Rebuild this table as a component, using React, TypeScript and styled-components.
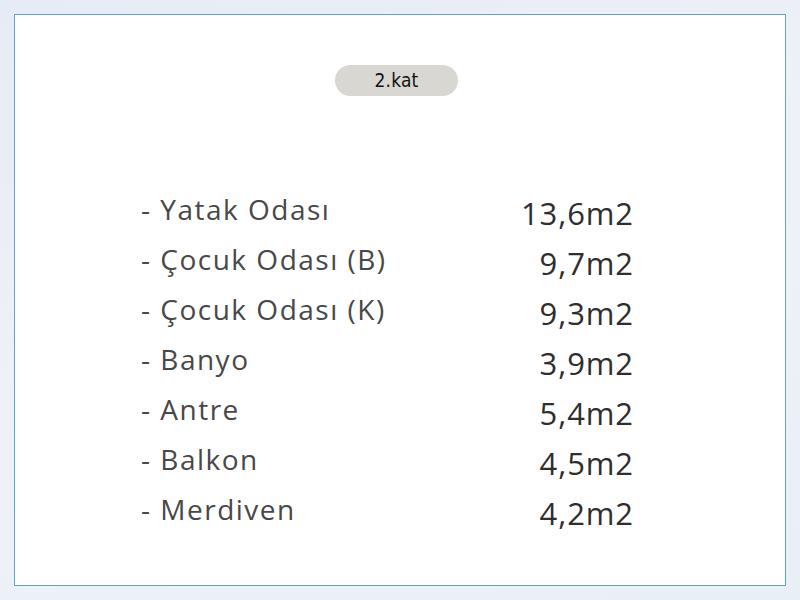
import React from "react";
import styled, { createGlobalStyle } from "styled-components";

const Global = createGlobalStyle`
  html, body { margin: 0; padding: 0; }
  body {
    width: 800px;
    height: 600px;
    overflow: hidden;
    background: linear-gradient(160deg, #e6ecf5 0%, #eef2f8 50%, #e9eff7 100%);
  }
`;

const Page = styled.div`
  width: 800px;
  height: 600px;
  padding: 14px;
  box-sizing: border-box;
`;

const Card = styled.div`
  width: 772px;
  height: 572px;
  box-sizing: border-box;
  border: 1px solid #5ea7bf;
  background: #ffffff;
  display: flex;
  flex-direction: column;
  align-items: center;
  padding-top: 50px;
`;

const Pill = styled.div`
  width: 123px;
  height: 31px;
  border-radius: 16px;
  background: #d9d7d2;
  display: flex;
  align-items: center;
  justify-content: center;
  font-family: "DejaVu Sans", sans-serif;
  font-stretch: condensed;
  font-weight: 400;
  font-size: 19px;
  letter-spacing: 0.2px;
  color: #111111;
  margin-left: -7px;
  padding-bottom: 2px;
  box-sizing: border-box;
`;

const List = styled.div`
  margin-top: 92px;
  width: 492px;
  margin-left: -26px;
  display: flex;
  flex-direction: column;
`;

const Row = styled.div`
  display: flex;
  justify-content: space-between;
  align-items: center;
  height: 50px;
`;

const Label = styled.span`
  font-family: "Open Sans", "Liberation Sans", sans-serif;
  font-size: 28px;
  letter-spacing: 1.5px;
  color: #484848;
  margin-top: -8px;
`;

const Value = styled.span`
  font-family: "Open Sans", "Liberation Sans", sans-serif;
  font-size: 31px;
  letter-spacing: 0.9px;
  color: #2e2e2e;
  margin-right: -1px;
`;

const rooms: [string, string][] = [
  ["Yatak Odası", "13,6m2"],
  ["Çocuk Odası (B)", "9,7m2"],
  ["Çocuk Odası (K)", "9,3m2"],
  ["Banyo", "3,9m2"],
  ["Antre", "5,4m2"],
  ["Balkon", "4,5m2"],
  ["Merdiven", "4,2m2"],
];

export default function App() {
  return (
    <>
      <Global />
      <Page>
        <Card>
          <Pill>2.kat</Pill>
          <List>
            {rooms.map(([name, area]) => (
              <Row key={name}>
                <Label>- {name}</Label>
                <Value>{area}</Value>
              </Row>
            ))}
          </List>
        </Card>
      </Page>
    </>
  );
}
